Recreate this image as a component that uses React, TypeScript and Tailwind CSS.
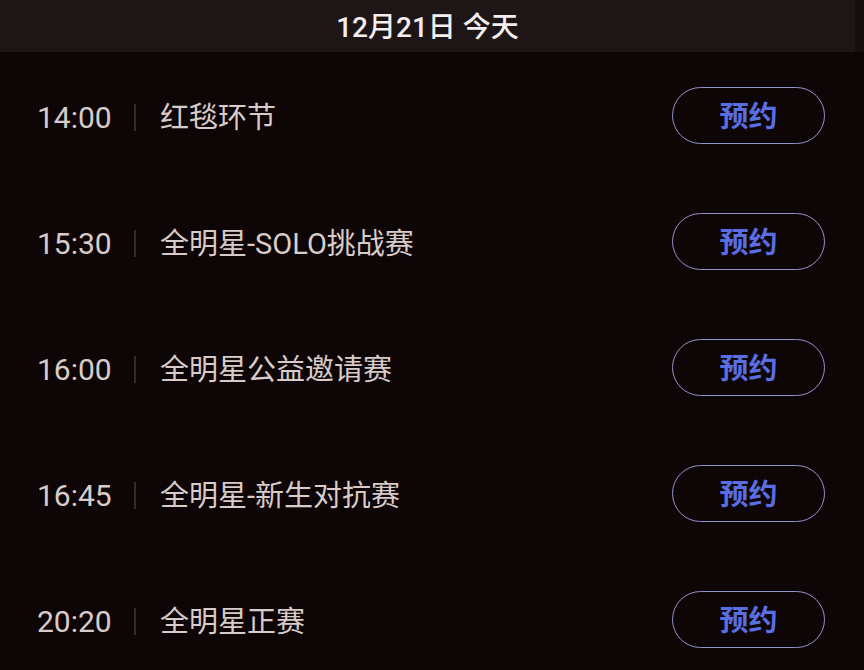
import React from "react";

const rows = [
  { time: "14:00", title: "红毯环节" },
  { time: "15:30", title: "全明星-SOLO挑战赛" },
  { time: "16:00", title: "全明星公益邀请赛" },
  { time: "16:45", title: "全明星-新生对抗赛" },
  { time: "20:20", title: "全明星正赛" },
];

export default function App() {
  return (
    <div
      className="w-[864px] h-[670px] overflow-hidden bg-[#0e0606] flex flex-col"
      style={{ fontFamily: 'Roboto, "Noto Sans CJK SC", sans-serif' }}
    >
      <div className="flex">
        <div className="w-[855px] h-[52px] bg-[#1e1516] flex items-center justify-center pt-[3px] text-[28px] font-medium text-[#f4eeee] leading-none">
          12月21日 今天
        </div>
        <div className="flex-1 h-[52px] bg-[#150d0e]" />
      </div>
      <div className="flex flex-col pt-[2px]">
        {rows.map((r) => (
          <div key={r.time} className="h-[126px] flex items-center pl-[37px] pr-[39px]">
            <div className="w-[76px] text-[30px] text-[#d8ccca] leading-none pt-[1px] whitespace-nowrap">{r.time}</div>
            <div className="w-[2px] h-[27px] bg-[#342a2a] ml-[21px] mr-[24px]" />
            <div className="flex-1 text-[29px] text-[#d8ccca] leading-none pt-[2px]">{r.title}</div>
            <div className="w-[153px] h-[57px] rounded-full border-[1.5px] border-[#9292cc] flex items-center justify-center pt-[5px] text-[29px] font-semibold text-[#5a6ee2] leading-none -mt-[4px]">
              预约
            </div>
          </div>
        ))}
      </div>
    </div>
  );
}
